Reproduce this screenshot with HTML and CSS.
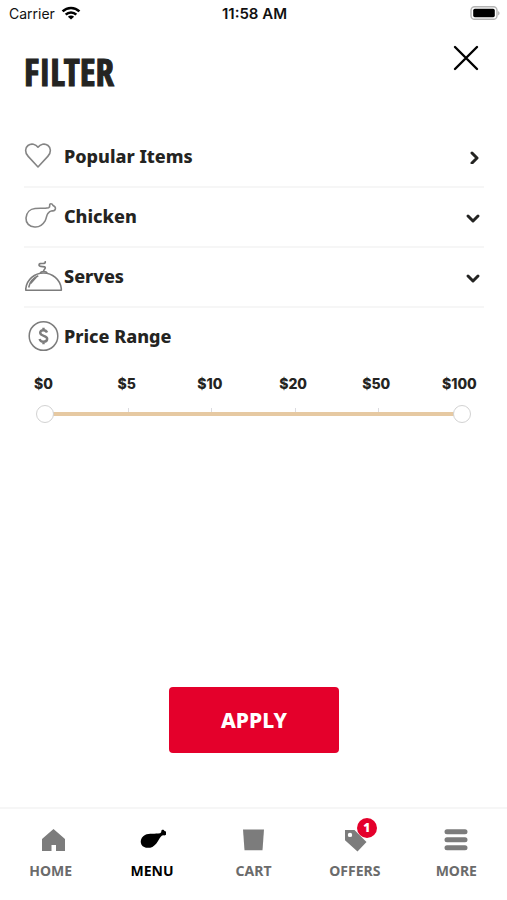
FILE: index.html
```html
<!DOCTYPE html>
<html lang="en">
<head>
    <meta charset="UTF-8">
    <meta name="viewport" content="width=device-width, initial-scale=1">
    <title>Filter</title>
    <link rel="stylesheet" href="styles.css">
</head>
<body>
    <div class="status-bar">
        <div class="carrier">
            <span>Carrier</span>
            <svg width="20" height="14" viewBox="0 0 20 14" fill="none" stroke="#000" stroke-width="2.6">
                <path d="M1.6 5.4a12 12 0 0 1 16.8 0M4.7 8.6a7.6 7.6 0 0 1 10.6 0"/>
                <path d="M10 13.6L6.9 10.7a4.4 4.4 0 0 1 6.2 0z" fill="#000" stroke="none"/>
            </svg>
        </div>
        <div class="time">11:58 AM</div>
        <svg class="battery" width="30" height="14" viewBox="0 0 30 14">
            <rect x="1" y=".7" width="26" height="12.6" rx="3.6" fill="#fff" stroke="#b4b4b4" stroke-width="1.4"/>
            <rect x="3.2" y="2.8" width="21.6" height="8.4" rx="1.6" fill="#000"/>
            <path d="M28.200 5v4.400c1.800-.8 1.800-3.600 0-4.400z" fill="#aaa"/>
        </svg>
    </div>

    <main class="filter">
        <header class="filter-header">
            <h1>FILTER</h1>
            <button type="button" class="close-button" aria-label="Close">
                <svg width="26" height="26" viewBox="0 0 26 26" fill="none" stroke="#000" stroke-width="2.4" stroke-linecap="round">
                    <path d="M2 2l22 22M24 2L2 24"/>
                </svg>
            </button>
        </header>

        <div class="filter-list">
            <button type="button" class="filter-row">
                <svg width="40" height="40" viewBox="0 0 40 40" fill="none" stroke="#858585" stroke-width="1.6" stroke-linejoin="round">
                    <path d="M14 31L4.200 20.400C.4 16.300 1.200 11.700 4 9.500c3.300-2.500 7.800-1.400 10 1.700 2.200-3.100 6.700-4.200 10-1.700 2.800 2.200 3.600 6.800-.2 10.900z"/>
                </svg>
                <span>Popular Items</span>
                <svg class="arrow" width="16" height="16" viewBox="0 0 16 16"><path d="M7 5l5 5-5 5"/></svg>
            </button>
            <button type="button" class="filter-row">
                <svg width="40" height="40" viewBox="0 0 40 40" fill="none" stroke="#858585" stroke-width="1.6" stroke-linejoin="round">
                    <path d="M24.800 11.700c1.200-.8 1-1.700.9-2.700-.1-1.400 2.200-2 3.300.4 1.600.7 2.600 2 2.400 3.300-.4 1.700-1.900 2.300-3.300 2.100-1.700.4-2.900.9-4.200 2.600-1.700 2.400-1.200 4.500-2.800 7.500-2.600 4.400-6.400 6.400-10.400 6.100C5.400 30.700 1.700 27.300 2 22c.4-5.800 4.500-9 9-9.500 4.600-.4 9.200.1 13.800-.8z"/>
                </svg>
                <span>Chicken</span>
                <svg class="arrow" width="16" height="16" viewBox="0 0 16 16"><path d="M3 8l5 5 5-5"/></svg>
            </button>
            <button type="button" class="filter-row">
                <svg width="40" height="40" viewBox="0 0 40 40" fill="none" stroke="#7c7c7c" stroke-width="1.6" stroke-linejoin="round">
                    <path d="M1.800 34.200h35.500V32.600C36.300 23.600 28.300 17 19.500 17S2.800 23.600 1.800 32.600z"/>
                    <path d="M4.700 31.500c1-5.400 4.600-9.500 9.600-11.700M6.600 27.500l5.600-6.200M16.500 17.200c.4-2.200 6-2.200 6.400 0"/>
                    <path d="M19.600 15.200c-.1-1.700 2.400-2.500 1.600-4-.8-1.100-6.200.2-6.200-2.200 0-2.300 3.600-1.200 5.200-1.600 1.400-.3 1.200-1.300 1-2.300"/>
                </svg>
                <span>Serves</span>
                <svg class="arrow" width="16" height="16" viewBox="0 0 16 16"><path d="M3 8l5 5 5-5"/></svg>
            </button>
            <div class="filter-row">
                <svg width="40" height="40" viewBox="0 0 40 40" fill="none" stroke="#7c7c7c">
                    <circle cx="19.500" cy="20" r="14.300" stroke-width="1.5"/>
                    <path d="M23 16.500c-.6-1.700-1.800-2.300-3.400-2.300-2 0-3.400.9-3.400 2.600 0 3.800 7 2.200 7 6 0 1.900-1.600 3-3.700 3-2 0-3.400-.9-3.900-2.800M19.500 11.800v2.400M19.500 25.700v2.500" stroke-width="2.400"/>
                </svg>
                <span id="priceLabel">Price Range</span>
            </div>
        </div>

        <div class="price-range" role="group" aria-labelledby="priceLabel">
            <div class="price-labels">
                <span>$0</span>
                <span>$5</span>
                <span>$10</span>
                <span>$20</span>
                <span>$50</span>
                <span>$100</span>
            </div>
            <div class="slider">
                <div class="ticks"><i></i><i></i><i></i><i></i></div>
                <div class="track"></div>
                <input type="range" min="0" max="5" value="0" aria-label="Minimum price">
                <input type="range" min="0" max="5" value="5" aria-label="Maximum price">
            </div>
        </div>

        <button type="button" class="apply-button">APPLY</button>
    </main>

    <nav class="tab-bar">
        <a href="#home">
            <svg width="28" height="28" viewBox="0 0 28 28" fill="#7c7c7c">
                <path d="M16.500 3L28 13v12H19v-6h-4.500v6H5V13z"/>
            </svg>
            <span>HOME</span>
        </a>
        <a href="#menu" class="active">
            <svg width="28" height="28" viewBox="0 0 28 28" fill="#000">
                <path d="M22 7.200c1.300-.6 1.300-1.300 1.300-2 .1-1.700 2.600-2 3.200-.2 1.900.3 2.600 1.700 2 3-.7 1.400-2.200 1.500-3.400 1.300-2.100.6-2.700 1.900-3.900 3.800-1.700 3-3.500 6.300-6.800 7.800-3.800 1.600-8.800 1.200-10.900-2.200-1.900-3.700-.1-8 3.500-9.800 4.200-2 10.300-.8 15-1.700z"/>
            </svg>
            <span>MENU</span>
        </a>
        <a href="#cart">
            <svg width="28" height="28" viewBox="0 0 28 28" fill="#7c7c7c">
                <path d="M4 3.500h21L23.500 24.300H5.500z"/>
            </svg>
            <span>CART</span>
        </a>
        <a href="#offers">
            <svg width="28" height="28" viewBox="0 0 28 28" fill="#7c7c7c">
                <path fill-rule="evenodd" d="M4 4h9.500L25.500 16l-9 9.500L4 14.300zM9 6.700a2.200 2.200 0 1 0 0 4.400 2.200 2.200 0 0 0 0-4.400z"/>
            </svg>
            <b class="badge">1</b>
            <span>OFFERS</span>
        </a>
        <a href="#more">
            <svg width="28" height="28" viewBox="0 0 28 28" stroke="#7c7c7c" stroke-width="5" stroke-linecap="round">
                <path d="M5 5.700h18M5 13.700h18M5 21.700h18"/>
            </svg>
            <span>MORE</span>
        </a>
    </nav>
</body>
</html>
```

FILE: styles.css
```css
* {
    box-sizing: border-box;
}

body {
    margin: 0;
    min-height: 100vh;
    display: flex;
    flex-direction: column;
    background: #fff;
    color: #242422;
    font-family: "Noto Sans", "Open Sans", sans-serif;
}

button {
    padding: 0;
    border: none;
    background: none;
    color: inherit;
    font: inherit;
    cursor: pointer;
}

svg {
    display: block;
    flex: none;
}

/* status bar */
.status-bar {
    display: grid;
    grid-template-columns: 1fr auto 1fr;
    align-items: center;
    height: 26px;
    padding: 0 7px 0 9px;
    color: #111;
    font-family: Inter, sans-serif;
    font-size: 14px;
}

.carrier {
    display: flex;
    align-items: center;
    gap: 6px;
}

.time {
    font-size: 15px;
    font-weight: 600;
}

.battery {
    justify-self: end;
}

/* filter page */
.filter {
    flex: 1;
    display: flex;
    flex-direction: column;
    padding: 0 23px 54px 24px;
}

.filter-header {
    display: flex;
    justify-content: space-between;
    align-items: flex-start;
    padding-top: 19px;
}

h1 {
    margin: 7px 0 0;
    font-family: "Open Sans Condensed", sans-serif;
    font-size: 37px;
    line-height: 40px;
    font-weight: bold;
    -webkit-text-stroke: 1px #242422;
}

.close-button {
    margin-right: 5px;
}

.filter-list {
    margin-top: 36px;
}

.filter-row {
    display: flex;
    align-items: center;
    width: 100%;
    height: 60px;
    padding-bottom: 3px;
    border-bottom: 2px solid #f6f6f6;
    font-size: 18px;
    font-weight: 800;
    text-align: left;
}

.filter-row:last-child {
    border-color: transparent;
}

.arrow {
    margin: 0 3px 0 auto;
    fill: none;
    stroke: #242422;
    stroke-width: 3;
    stroke-linecap: round;
    stroke-linejoin: round;
}

.price-labels {
    display: grid;
    grid-template-columns: repeat(6, 1fr);
    margin: 4px -17px 0 -22px;
    font-family: Inter, sans-serif;
    font-size: 14px;
    line-height: 24px;
    font-weight: 800;
    text-align: center;
}

/* two range inputs share one grid cell */
.slider {
    display: grid;
    align-items: center;
    margin: 9px 13px 0 12px;
}

.slider > * {
    grid-area: 1 / 1;
}

.ticks {
    display: flex;
    justify-content: space-evenly;
    align-self: start;
    height: 9px;
    margin: 0 9px;
    padding-top: 3px;
}

.ticks i {
    width: 1px;
    background: #dcdce0;
}

.track {
    height: 4px;
    margin: 0 9px;
    background: #e6c9a2;
}

.slider input {
    -webkit-appearance: none;
    appearance: none;
    width: 100%;
    height: 18px;
    margin: 0;
    background: none;
    pointer-events: none;
}

.slider input::-webkit-slider-thumb {
    -webkit-appearance: none;
    width: 18px;
    height: 18px;
    border: 1px solid #d2d2d2;
    border-radius: 50%;
    background: #fff;
    pointer-events: auto;
}

.apply-button {
    align-self: center;
    width: 170px;
    height: 66px;
    margin-top: auto;
    border-radius: 4px;
    background: #e4002b;
    color: #fff;
    font-size: 21px;
    font-weight: 800;
}

/* bottom tabs */
.tab-bar {
    display: grid;
    grid-template-columns: repeat(5, 1fr);
    height: 93px;
    padding-top: 17px;
    border-top: 2px solid #f6f6f6;
}

.tab-bar a {
    position: relative;
    display: flex;
    flex-direction: column;
    align-items: center;
    gap: 7px;
    color: #6b6b6b;
    font-size: 14px;
    line-height: 20px;
    font-weight: bold;
    text-decoration: none;
}

.tab-bar .active {
    color: #000;
}

.badge {
    position: absolute;
    top: -8px;
    left: calc(50% + 2px);
    width: 20px;
    height: 20px;
    border-radius: 50%;
    background: #e4002b;
    color: #fff;
    font-size: 12px;
    text-align: center;
}
```
